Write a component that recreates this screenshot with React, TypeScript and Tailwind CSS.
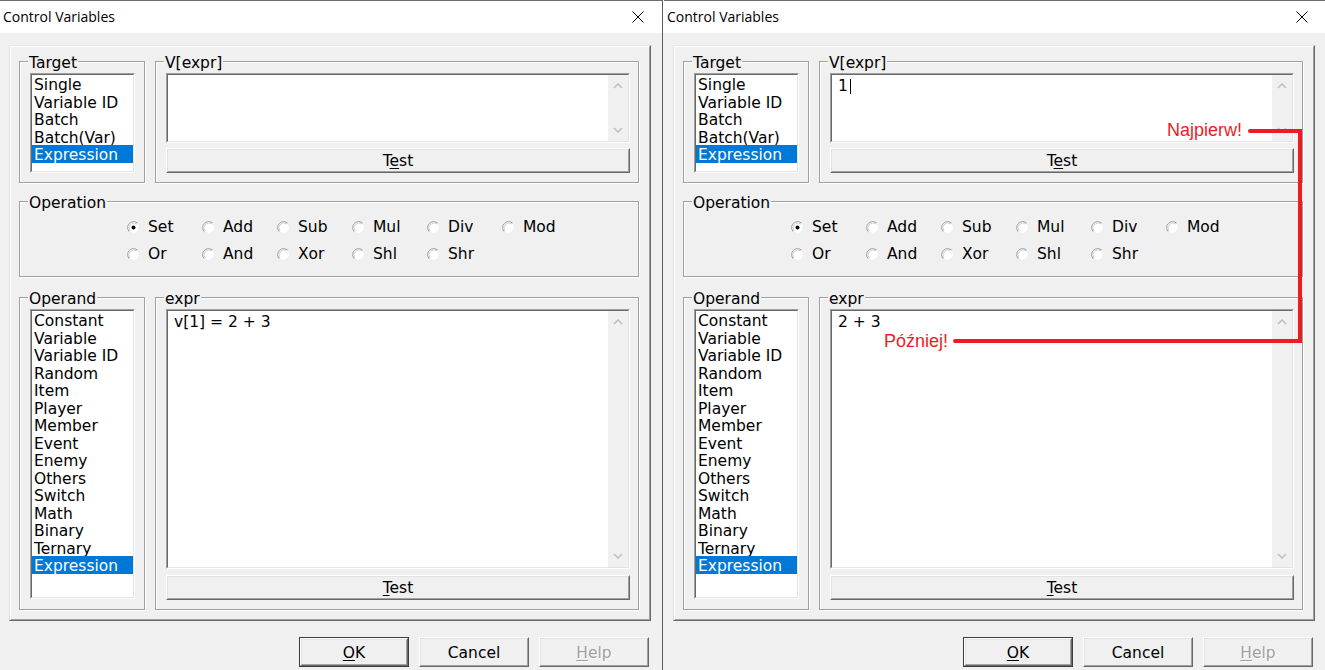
import React from "react";

type Kids = { className?: string; children?: React.ReactNode };

const targets = ["Single", "Variable ID", "Batch", "Batch(Var)", "Expression"];
const operands = [
  "Constant",
  "Variable",
  "Variable ID",
  "Random",
  "Item",
  "Player",
  "Member",
  "Event",
  "Enemy",
  "Others",
  "Switch",
  "Math",
  "Binary",
  "Ternary",
  "Expression",
];
const operations = [
  ["Set", "Add", "Sub", "Mul", "Div", "Mod"],
  ["Or", "And", "Xor", "Shl", "Shr"],
];

// classic 3d sunken frame (list boxes, edit boxes)
function Sunken({ className = "", children }: Kids) {
  return (
    <div className={`border border-t-[#a0a0a0] border-l-[#a0a0a0] border-r-white border-b-white ${className}`}>
      <div className="h-full w-full overflow-hidden border border-t-[#696969] border-l-[#696969] border-r-[#e3e3e3] border-b-[#e3e3e3] bg-white">
        {children}
      </div>
    </div>
  );
}

function Button({ className = "", children, isDefault }: Kids & { isDefault?: boolean }) {
  const face = (
    <div className="h-full w-full border border-t-white border-l-white border-r-[#696969] border-b-[#696969]">
      <div className="flex h-full w-full items-center justify-center border border-t-[#e3e3e3] border-l-[#e3e3e3] border-r-[#a0a0a0] border-b-[#a0a0a0] bg-[#f0f0f0] pt-[2px]">
        {children}
      </div>
    </div>
  );
  if (isDefault) {
    return <div className={`border border-[#3c3c3c] ${className}`}>{face}</div>;
  }
  return <div className={className}>{face}</div>;
}

function GroupBox({ label, className = "", children }: Kids & { label: string }) {
  return (
    <div className={`relative border border-[#a0a0a0] shadow-[inset_1px_1px_0_#fff,1px_1px_0_#fff] ${className}`}>
      <span className="absolute -top-[8px] left-[8px] bg-[#f0f0f0] px-[1px] leading-[18px]">{label}</span>
      {children}
    </div>
  );
}

function ListBox({ items, selected, className = "" }: { items: string[]; selected: string; className?: string }) {
  return (
    <Sunken className={className}>
      <div className="flex flex-col">
        {items.map((item, i) => (
          <div
            key={i}
            className={`h-[17.5px] whitespace-nowrap pl-[2px] leading-[21px] ${
              item === selected && i === items.length - 1 ? "bg-[#0078d7] text-white" : ""
            }`}
          >
            {item}
          </div>
        ))}
      </div>
    </Sunken>
  );
}

function Chevron({ up }: { up?: boolean }) {
  return (
    <svg width="10" height="6" viewBox="0 0 10 6">
      <polyline
        points={up ? "1,5 5,1 9,5" : "1,1 5,5 9,1"}
        fill="none"
        stroke="#bfbfbf"
        strokeWidth="1.5"
      />
    </svg>
  );
}

function EditBox({ text, caret, className = "" }: { text: string; caret?: boolean; className?: string }) {
  return (
    <Sunken className={className}>
      <div className="flex h-full">
        <div className="flex-1 whitespace-pre pl-[6px] pt-[3px] leading-[17.5px]">
          {text}
          {caret && <span className="ml-[2px] inline-block h-[15px] w-px bg-black align-[-3px]" />}
        </div>
        <div className="flex w-[20px] flex-col justify-between bg-[#f0f0f0]">
          <div className="flex h-[22px] items-center justify-center">
            <Chevron up />
          </div>
          <div className="flex h-[22px] items-center justify-center">
            <Chevron />
          </div>
        </div>
      </div>
    </Sunken>
  );
}

function Radio({ checked }: { checked?: boolean }) {
  return (
    <svg width="13" height="13" viewBox="0 0 13 13" className="shrink-0">
      <circle cx="6.5" cy="6.5" r="6" fill="#fff" />
      <path d="M2.26 10.74 A6 6 0 0 1 10.74 2.26" fill="none" stroke="#9a9a9a" />
      <path d="M3 10 A5 5 0 0 1 10 3" fill="none" stroke="#cfcfcf" />
      <path d="M10.74 2.26 A6 6 0 0 1 2.26 10.74" fill="none" stroke="#ececec" />
      {checked && <circle cx="6.5" cy="6.5" r="2" fill="#000" />}
    </svg>
  );
}

function ControlVariables({ vExpr, expr, caret }: { vExpr: string; expr: string; caret?: boolean }) {
  return (
    <div className="flex h-[670px] w-[662px] shrink-0 flex-col bg-[#f0f0f0]">
      {/* title bar */}
      <div className="flex h-[33px] shrink-0 items-center justify-between border-t border-[#6b6b6b] bg-white pl-[3px] pr-[18px]">
        <span className="font-['Open_Sans',sans-serif] text-[14px] text-black">Control Variables</span>
        <svg width="12" height="12" viewBox="0 0 12 12">
          <path d="M0.5 0.5 L11.5 11.5 M11.5 0.5 L0.5 11.5" stroke="#000" strokeWidth="1" />
        </svg>
      </div>

      {/* raised client panel */}
      <div className="ml-[9px] mt-[12px] h-[576px] w-[642px] border border-t-[#e3e3e3] border-l-[#e3e3e3] border-r-[#696969] border-b-[#696969]">
        <div className="flex h-full flex-col border border-t-white border-l-white border-r-[#a0a0a0] border-b-[#a0a0a0] pb-[9px] pl-[8px] pr-[10px] pt-[14px]">
          <div className="flex h-[122px] gap-[10px]">
            <GroupBox label="Target" className="w-[126px] pl-[10px] pt-[11px]">
              <ListBox items={targets} selected="Expression" className="h-[100px] w-[105px]" />
            </GroupBox>
            <GroupBox label="V[expr]" className="flex flex-1 flex-col gap-[5px] pl-[10px] pr-[8px] pt-[11px]">
              <EditBox text={vExpr} caret={caret} className="h-[70px]" />
              <Button className="h-[25px]">
                <span>
                  T<span className="underline underline-offset-2">e</span>st
                </span>
              </Button>
            </GroupBox>
          </div>

          <GroupBox label="Operation" className="mt-[18px] h-[76px] pl-[107px] pt-[12px]">
            {operations.map((row, r) => (
              <div key={r} className="flex h-[27px]">
                {row.map((op) => (
                  <div key={op} className="flex w-[75px] items-center gap-[8px]">
                    <Radio checked={op === "Set"} />
                    <span className="pt-[1px]">{op}</span>
                  </div>
                ))}
              </div>
            ))}
          </GroupBox>

          <div className="mt-[20px] flex h-[313px] gap-[10px]">
            <GroupBox label="Operand" className="w-[126px] pl-[10px] pt-[11px]">
              <ListBox items={operands} selected="Expression" className="h-[290px] w-[105px]" />
            </GroupBox>
            <GroupBox label="expr" className="flex flex-1 flex-col gap-[6px] pl-[10px] pr-[8px] pt-[11px]">
              <EditBox text={expr} className="h-[260px]" />
              <Button className="h-[25px]">
                <span>
                  <span className="underline underline-offset-2">T</span>est
                </span>
              </Button>
            </GroupBox>
          </div>
        </div>
      </div>

      {/* dialog buttons */}
      <div className="mt-[16px] flex justify-end gap-[10px] pr-[13px]">
        <Button isDefault className="h-[30px] w-[110px]">
          <span className="pt-[1px]">
            <span className="underline underline-offset-2">O</span>K
          </span>
        </Button>
        <Button className="h-[30px] w-[110px]">
          <span className="pt-[1px]">Cancel</span>
        </Button>
        <Button className="h-[30px] w-[110px]">
          <span className="pt-[1px] text-[#a0a0a0] [text-shadow:1px_1px_0_#fff]">
            <span className="underline underline-offset-2">H</span>elp
          </span>
        </Button>
      </div>
    </div>
  );
}

export default function App() {
  return (
    <div className="relative flex h-[670px] w-[1325px] overflow-hidden bg-[#f0f0f0] font-['DejaVu_Sans',sans-serif] text-[15.5px] leading-[17.5px] text-black">
      <ControlVariables vExpr="" expr="v[1] = 2 + 3" />
      <div className="flex w-[2px] shrink-0 flex-col">
        <div className="h-[33px] border-l border-[#5d5d5d] bg-white" />
        <div className="flex-1 border-l border-[#5d5d5d] bg-[#f0f0f0]" />
      </div>
      <ControlVariables vExpr="1" expr="2 + 3" caret />

      {/* red call-out drawn over the second dialog */}
      <svg className="pointer-events-none absolute left-0 top-0" width="1325" height="670">
        <polyline
          points="1250,131 1300,131 1300,341 955,341"
          fill="none"
          stroke="#ed1c24"
          strokeWidth="4"
          strokeLinecap="round"
          strokeLinejoin="miter"
        />
      </svg>
      <span className="absolute right-[83px] top-[120px] font-['Liberation_Sans',sans-serif] text-[18px] leading-[20px] text-[#ed1c24]">
        Najpierw!
      </span>
      <span className="absolute right-[377px] top-[331px] font-['Liberation_Sans',sans-serif] text-[18px] leading-[20px] text-[#ed1c24]">
        Później!
      </span>
    </div>
  );
}
